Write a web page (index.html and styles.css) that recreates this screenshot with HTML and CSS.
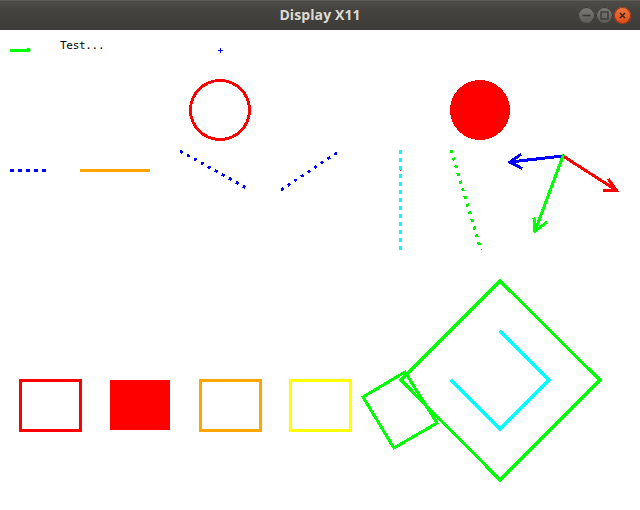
FILE: index.html
```html
<!DOCTYPE html>
<html>
<head>
<meta charset="utf-8">
<title>Display X11</title>
<link rel="stylesheet" href="styles.css">
</head>
<body>
<div class="window">
  <header class="titlebar">
    <div class="spacer"></div>
    <div class="title">Display X11</div>
    <div class="controls">
      <span class="btn btn-min"><svg viewBox="0 0 17 17" width="17" height="17"><line x1="4.5" y1="8.5" x2="12.5" y2="8.5" stroke="#3a3935" stroke-width="1.6"/></svg></span>
      <span class="btn btn-max"><svg viewBox="0 0 17 17" width="17" height="17"><rect x="5" y="5" width="7" height="7" fill="none" stroke="#3a3935" stroke-width="1.3"/></svg></span>
      <span class="btn btn-close"><svg viewBox="0 0 17 17" width="17" height="17"><path d="M6 6 L11 11 M11 6 L6 11" stroke="#3a2a22" stroke-width="1.5"/></svg></span>
    </div>
  </header>
  <main class="canvas">
    <svg class="drawing" width="640" height="480" viewBox="0 30 640 480" shape-rendering="crispEdges">
      <!-- top left green line -->
      <line x1="10" y1="50" x2="29" y2="50" stroke="#00ff00" stroke-width="3"/>
      <circle cx="28.5" cy="50" r="2.2" fill="#00ff00" shape-rendering="auto"/>
      <text x="60" y="49" class="label">Test...</text>
      <!-- blue plus -->
      <line x1="218" y1="50.5" x2="223" y2="50.5" stroke="#0000ff" stroke-width="1"/>
      <line x1="220.5" y1="48" x2="220.5" y2="53" stroke="#0000ff" stroke-width="1"/>

      <!-- circles -->
      <circle cx="220" cy="110" r="29.5" fill="none" stroke="#ff0000" stroke-width="3"/>
      <circle cx="480" cy="110" r="30" fill="#ff0000"/>

      <!-- dashed / solid lines -->
      <line x1="10" y1="170.5" x2="46" y2="170.5" stroke="#0000ff" stroke-width="3" stroke-dasharray="4 4"/>
      <line x1="80" y1="170.5" x2="150" y2="170.5" stroke="#ffa500" stroke-width="3"/>
      <line x1="180" y1="151" x2="250" y2="190" stroke="#0000ff" stroke-width="3" stroke-dasharray="3 5"/>
      <line x1="281" y1="190" x2="338" y2="152" stroke="#0000ff" stroke-width="3" stroke-dasharray="3 5"/>
      <line x1="400.5" y1="150" x2="400.5" y2="250" stroke="#00ffff" stroke-width="3" stroke-dasharray="4 4"/>
      <rect x="400" y="170" width="1" height="1" fill="#ff0000"/>
      <line x1="451" y1="150" x2="481" y2="250" stroke="#00ee00" stroke-width="3" stroke-dasharray="3 5"/>

      <!-- arrows -->
      <g stroke-width="3" fill="none" stroke-linecap="square">
        <polyline points="563,156 510,162" stroke="#0000ff"/>
        <polyline points="520,155 510,162 521,168" stroke="#0000ff"/>
        <polyline points="563,156 616,190" stroke="#ff0000"/>
        <polyline points="609,180 616,190 604,190" stroke="#ff0000"/>
        <polyline points="563,156 535,231" stroke="#00ff00"/>
        <polyline points="534,219 535,231 546,223" stroke="#00ff00"/>
      </g>

      <!-- rectangles -->
      <rect x="20" y="380" width="60" height="50" fill="none" stroke="#ff0000" stroke-width="3"/>
      <rect x="110" y="380" width="60" height="50" fill="#ff0000"/>
      <rect x="200" y="380" width="60" height="50" fill="none" stroke="#ffa500" stroke-width="3"/>
      <rect x="290" y="380" width="60" height="50" fill="none" stroke="#ffff00" stroke-width="3"/>

      <!-- diamond group -->
      <polygon points="500,281 600,380 500,480 401,380" fill="none" stroke="#00ff00" stroke-width="3"/>
      <polyline points="500,331 549,380 500,429 451,380" fill="none" stroke="#00ffff" stroke-width="3"/>
      <polygon points="405,372 363,397 394,448 437,423" fill="none" stroke="#00ff00" stroke-width="3"/>
    </svg>
  </main>
</div>
</body>
</html>
```
FILE: styles.css
```css
html, body {
  margin: 0;
  padding: 0;
  background: #ffffff;
}

.window {
  width: 640px;
  height: 510px;
  display: flex;
  flex-direction: column;
  overflow: hidden;
}

.titlebar {
  height: 30px;
  flex: none;
  display: grid;
  grid-template-columns: 1fr auto 1fr;
  align-items: center;
  background: linear-gradient(#4d4b46 0%, #44423e 40%, #3d3c38 100%);
  border-top: 1px solid #5e5c57;
  box-sizing: border-box;
}

.title {
  font-family: "Open Sans", "DejaVu Sans", sans-serif;
  font-weight: 700;
  font-size: 14px;
  color: #dfdbd2;
  letter-spacing: 0.1px;
  line-height: 1;
  padding-bottom: 1px;
}

.controls {
  display: flex;
  justify-content: flex-end;
  gap: 1px;
  padding-right: 9px;
}

.btn {
  width: 17px;
  height: 17px;
  border-radius: 50%;
  box-sizing: border-box;
  display: flex;
  align-items: center;
  justify-content: center;
  box-shadow: inset 0 0 0 1px #3b3a36;
}

.btn svg {
  display: block;
}

.btn-min,
.btn-max {
  background: linear-gradient(#7c7a75, #5c5b57);
}

.btn-close {
  background: linear-gradient(#f4773f, #de4a17);
  box-shadow: inset 0 0 0 1px #8a3a1c;
}

.canvas {
  flex: 1;
  background: #ffffff;
}

.drawing {
  display: block;
}

.label {
  font-family: "DejaVu Sans Mono", "Liberation Mono", monospace;
  font-size: 11px;
  letter-spacing: -0.3px;
  fill: #000000;
}
```
